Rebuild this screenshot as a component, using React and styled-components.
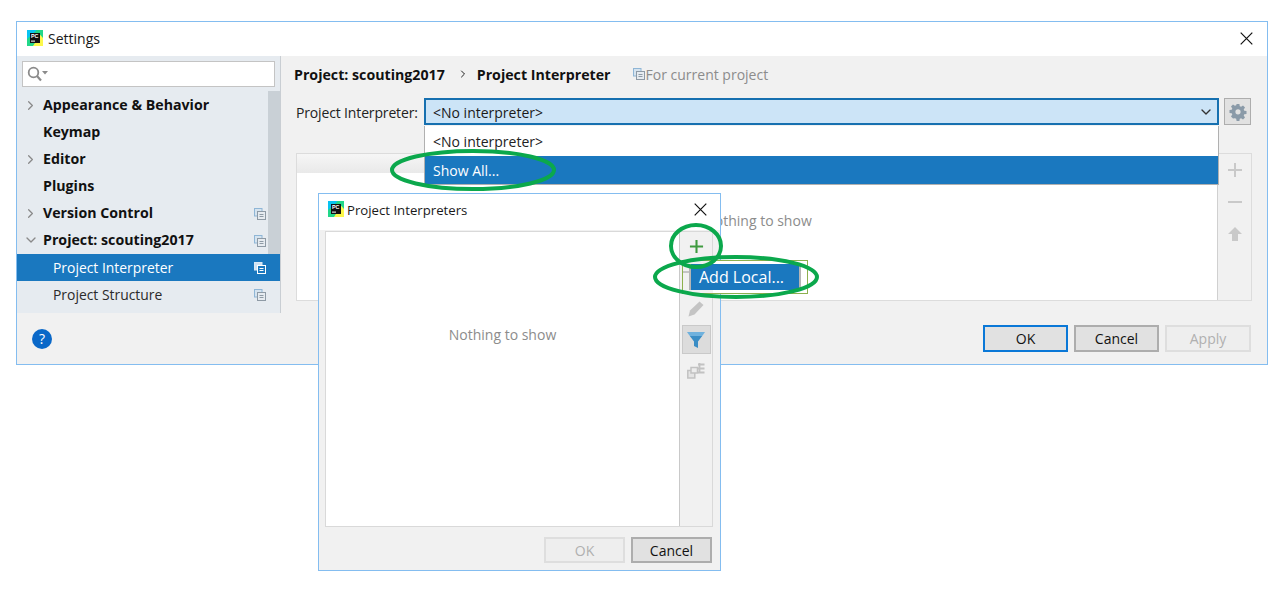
import React from "react";
import styled, { createGlobalStyle } from "styled-components";
import { ChevronRight, ChevronDown } from "lucide-react";

const GlobalStyle = createGlobalStyle`
  html, body { margin: 0; padding: 0; background: #fff; }
  body { font-family: "Open Sans", "Noto Sans", sans-serif; font-size: 14px; color: #1a1a1a; }
`;

const navItems = [
  { label: "Appearance & Behavior", arrow: "right" },
  { label: "Keymap" },
  { label: "Editor", arrow: "right" },
  { label: "Plugins" },
  { label: "Version Control", arrow: "right", copy: true },
  { label: "Project: scouting2017", arrow: "down", copy: true },
  { label: "Project Interpreter", child: true, selected: true, copy: true },
  { label: "Project Structure", child: true, copy: true },
];

const PcLogo = ({ size = 16 }) => (
  <svg width={size} height={size} viewBox="0 0 16 16">
    <rect width="16" height="16" fill="#21d789" />
    <path d="M0 0H10L0 9Z" fill="#07c3f2" />
    <path d="M16 0V16H6Z" fill="#fcf84a" />
    <path d="M9 0H16V8Z" fill="#21d789" />
    <rect x="3" y="3" width="10" height="10" fill="#111" />
    <text x="4" y="8.4" fontSize="5.4" fontWeight="700" fill="#fff" fontFamily="Liberation Sans, sans-serif">PC</text>
    <rect x="4" y="10.6" width="4" height="1" fill="#fff" />
  </svg>
);

const CloseIcon = () => (
  <svg width="13" height="13" viewBox="0 0 13 13">
    <path d="M.7.7 12.3 12.3M12.3.7.7 12.3" stroke="#111" strokeWidth="1.2" fill="none" />
  </svg>
);

const CopyIcon = ({ light }) => (
  <svg width="12" height="12" viewBox="0 0 12 12" fill="none">
    <rect x=".5" y=".5" width="7.5" height="7.5" fill={light ? "#cfe2f2" : "#d5e3ef"} stroke={light ? "#dbe9f5" : "#8fb6d6"} />
    <rect x="3.5" y="3.5" width="8" height="8" fill={light ? "#1a78bf" : "#e6ebf0"} stroke={light ? "#fff" : "#8e9aa5"} />
    <path d="M5.5 6.5h4M5.5 8.5h4" stroke={light ? "#fff" : "#8e9aa5"} />
  </svg>
);

const SearchIcon = () => (
  <svg width="22" height="16" viewBox="0 0 22 16" fill="none">
    <circle cx="6.5" cy="6.5" r="4.8" stroke="#8b8b8b" strokeWidth="1.8" />
    <path d="M10 10l4 4.5" stroke="#8b8b8b" strokeWidth="2.2" />
    <path d="M15 5h6l-3 3.4z" fill="#8b8b8b" />
  </svg>
);

const GearIcon = () => (
  <svg width="18" height="18" viewBox="0 0 18 18">
    <path
      fill="#8a9aa8"
      fillRule="evenodd"
      d="M7.6 1h2.8l.4 2.2 1.3.6 1.9-1.3 2 2-1.3 1.9.6 1.3 2.2.4v2.8l-2.2.4-.6 1.3 1.3 1.9-2 2-1.9-1.3-1.3.6-.4 2.2H7.6l-.4-2.2-1.3-.6L4 15.5l-2-2 1.3-1.9-.6-1.3L.5 9.9V7.1l2.2-.4.6-1.3L2 3.5l2-2 1.9 1.3 1.3-.6zM9 6.2a2.6 2.6 0 1 0 0 5.2 2.6 2.6 0 0 0 0-5.2z"
    />
  </svg>
);

const PlusIcon = ({ color, size = 16, weight = 2 }) => (
  <svg width={size} height={size} viewBox="0 0 16 16">
    <path d="M8 1v14M1 8h14" stroke={color} strokeWidth={weight} />
  </svg>
);

const MinusIcon = () => (
  <svg width="16" height="16" viewBox="0 0 16 16">
    <path d="M1 8h14" stroke="#c9c9c9" strokeWidth="2" />
  </svg>
);

const UpIcon = () => (
  <svg width="16" height="16" viewBox="0 0 16 16">
    <path d="M8 1l7 7h-4v7H5V8H1z" fill="#c9c9c9" />
  </svg>
);

const PencilIcon = () => (
  <svg width="16" height="16" viewBox="0 0 16 16">
    <path d="M.5 15.500l1.500-6L11.500.5 15.500 4l-9 9.500z" fill="#c4c4c4" />
  </svg>
);

const FilterIcon = () => (
  <svg width="18" height="16" viewBox="0 0 18 16">
    <path d="M0 0h18l-2.800 4H2.800z" fill="#6fb1dd" />
    <path d="M2.800 4h12.400L11 9.500V16L7 14V9.500z" fill="#3a8dc5" />
  </svg>
);

const TreeIcon = () => (
  <svg width="18" height="16" viewBox="0 0 18 16" fill="none" stroke="#c2c2c2" strokeWidth="1.500">
    <rect x=".8" y="7.500" width="7" height="7.500" fill="#e4e4e4" />
    <rect x="4" y="4.500" width="6.500" height="5.500" fill="#ececec" />
    <path d="M11 1.500h6.500M11 5.500h6.500M11 9.500h6.500M12.500 0v10" strokeWidth="1.800" />
  </svg>
);

export default function App() {
  return (
    <Page>
      <GlobalStyle />
      <SettingsWindow>
        <TitleBar>
          <TitleLeft>
            <PcLogo />
            <span>Settings</span>
          </TitleLeft>
          <CloseIcon />
        </TitleBar>
        <Main>
          <Sidebar>
            <SearchBox>
              <SearchIcon />
            </SearchBox>
            <NavList>
              {navItems.map(item => (
                <NavRow key={item.label} $selected={item.selected} $child={item.child}>
                  {!item.child && (
                    <ArrowSlot>
                      {item.arrow === "right" && <ChevronRight size={15} strokeWidth={2} color="#8a8a8a" />}
                      {item.arrow === "down" && <ChevronDown size={16} strokeWidth={2} color="#8a8a8a" />}
                    </ArrowSlot>
                  )}
                  <NavLabel $bold={!item.child}>{item.label}</NavLabel>
                  {item.copy && (
                    <CopySlot>
                      <CopyIcon light={item.selected} />
                    </CopySlot>
                  )}
                </NavRow>
              ))}
            </NavList>
            <ScrollThumb />
          </Sidebar>
          <Content>
            <Breadcrumb>
              <strong>Project: scouting2017</strong>
              <CrumbSeparator>
                <ChevronRight size={12} strokeWidth={2} color="#222" />
              </CrumbSeparator>
              <strong>Project Interpreter</strong>
              <ForProject>
                <CopyIcon />
                For current project
              </ForProject>
            </Breadcrumb>
            <InterpreterRow>
              <label>Project Interpreter:</label>
              <Combo>
                <span>&lt;No interpreter&gt;</span>
                <ChevronDown size={16} strokeWidth={2} color="#333" />
              </Combo>
              <GearButton>
                <GearIcon />
              </GearButton>
            </InterpreterRow>
            <TablePanel>
              <TableMain>
                <TableHead />
                <EmptyText>Nothing to show</EmptyText>
              </TableMain>
              <SideTools>
                <PlusIcon color="#c9c9c9" />
                <MinusIcon />
                <UpIcon />
              </SideTools>
            </TablePanel>
          </Content>
        </Main>
        <Footer>
          <HelpButton>?</HelpButton>
          <ButtonRow>
            <DialogButton $width={85} $primary>OK</DialogButton>
            <DialogButton $width={85}>Cancel</DialogButton>
            <DialogButton $width={86} disabled>Apply</DialogButton>
          </ButtonRow>
        </Footer>
      </SettingsWindow>

      <DropdownList>
        <DropItem>&lt;No interpreter&gt;</DropItem>
        <DropItem $active>Show All...</DropItem>
      </DropdownList>

      <InterpretersDialog>
        <DialogTitle>
          <TitleLeft>
            <PcLogo />
            <span>Project Interpreters</span>
          </TitleLeft>
          <CloseIcon />
        </DialogTitle>
        <DialogBody>
          <ListArea>
            <ListBox>Nothing to show</ListBox>
            <ListTools>
              <ToolSlot>
                <PlusIcon color="#3f9b3f" size={15} weight={2.2} />
              </ToolSlot>
              <ToolSlot />
              <ToolSlot>
                <PencilIcon />
              </ToolSlot>
              <ToolSlot $active>
                <FilterIcon />
              </ToolSlot>
              <ToolSlot>
                <TreeIcon />
              </ToolSlot>
            </ListTools>
          </ListArea>
          <DialogActions>
            <DialogButton $width={81} $short disabled>OK</DialogButton>
            <DialogButton $width={81} $short>Cancel</DialogButton>
          </DialogActions>
        </DialogBody>
      </InterpretersDialog>

      <PopupFrame>
        <MinusPeek />
        <AddLocal>Add Local...</AddLocal>
      </PopupFrame>

      <Annotations viewBox="0 0 1281 593">
        <ellipse cx="473" cy="170" rx="81" ry="19" />
        <ellipse cx="696" cy="246" rx="25" ry="21" />
        <ellipse cx="736" cy="277" rx="81" ry="20" />
      </Annotations>
    </Page>
  );
}

const Page = styled.div`
  position: relative;
  width: 1281px;
  height: 593px;
  padding: 21px 0 0 16px;
  box-sizing: border-box;
  overflow: hidden;
`;

const SettingsWindow = styled.div`
  width: 1252px;
  height: 344px;
  box-sizing: border-box;
  border: 1px solid #84bdf0;
  background: #f1f1f1;
  display: flex;
  flex-direction: column;
`;

const TitleBar = styled.div`
  height: 34px;
  flex: none;
  box-sizing: border-box;
  background: #fff;
  display: flex;
  align-items: center;
  justify-content: space-between;
  padding: 0 14px 2px 10px;
  span { font-size: 14px; }
`;

const TitleLeft = styled.div`
  display: flex;
  align-items: center;
  gap: 5px;
`;

const Main = styled.div`
  flex: none;
  height: 257px;
  display: flex;
`;

const Sidebar = styled.div`
  position: relative;
  width: 263px;
  flex: none;
  background: #e6ebf0;
  border-right: 1px solid #c9ced3;
`;

const SearchBox = styled.div`
  height: 26px;
  margin: 5px 5px 0 5px;
  box-sizing: border-box;
  background: #fff;
  border: 1px solid #c4c4c4;
  display: flex;
  align-items: center;
  padding-left: 4px;
`;

const NavList = styled.div`
  padding-top: 5px;
`;

const NavRow = styled.div`
  height: 27px;
  display: flex;
  align-items: center;
  background: ${p => (p.$selected ? "#1a78bf" : "transparent")};
  color: ${p => (p.$selected ? "#fff" : p.$child ? "#2a2a2a" : "#111")};
  padding-left: ${p => (p.$child ? "36px" : "6px")};
`;

const ArrowSlot = styled.div`
  width: 20px;
  flex: none;
  display: flex;
  align-items: center;
  margin-top: -1px;
`;

const NavLabel = styled.span`
  font-size: ${p => (p.$bold ? "14.2px" : "13.9px")};
  font-weight: ${p => (p.$bold ? 700 : 400)};
  margin-top: ${p => (p.$bold ? "-2px" : "0")};
`;

const CopySlot = styled.div`
  margin-left: auto;
  margin-right: 14px;
  display: flex;
`;

const ScrollThumb = styled.div`
  position: absolute;
  right: 0;
  top: 35px;
  width: 12px;
  height: 163px;
  background: #c9d0d6;
`;

const Content = styled.div`
  flex: 1;
  min-width: 0;
  padding: 8px 16px 0 13px;
`;

const Breadcrumb = styled.div`
  height: 20px;
  display: flex;
  align-items: center;
  gap: 8px;
  strong { font-size: 14.2px; font-weight: 700; color: #111; }
`;

const CrumbSeparator = styled.span`
  display: flex;
  margin-left: 4px;
`;

const ForProject = styled.span`
  display: flex;
  align-items: center;
  gap: 1px;
  margin-left: 14px;
  color: #8c8c8c;
  font-size: 14px;
`;

const InterpreterRow = styled.div`
  margin: 14px 0 0 2px;
  height: 27px;
  display: flex;
  align-items: center;
  label { width: 128px; flex: none; color: #222; font-size: 14px; letter-spacing: -0.15px; padding-top: 2px; }
`;

const Combo = styled.div`
  flex: 1;
  height: 27px;
  box-sizing: border-box;
  background: #cce4f7;
  border: 2px solid #1670b0;
  display: flex;
  align-items: center;
  justify-content: space-between;
  padding: 0 3px 0 7px;
  span { padding-top: 2px; }
`;

const GearButton = styled.div`
  width: 27px;
  height: 27px;
  margin-left: 5px;
  box-sizing: border-box;
  background: #e1e1e1;
  border: 1px solid #adadad;
  display: flex;
  align-items: center;
  justify-content: center;
`;

const TablePanel = styled.div`
  margin: 28px 0 0 2px;
  width: 956px;
  height: 148px;
  box-sizing: border-box;
  border: 1px solid #dcdcdc;
  display: flex;
`;

const TableMain = styled.div`
  flex: 1;
  background: #fff;
  display: flex;
  flex-direction: column;
  border-right: 1px solid #d0d0d0;
`;

const TableHead = styled.div`
  height: 19px;
  background: linear-gradient(#f6f6f6, #e9e9e9);
`;

const EmptyText = styled.div`
  flex: 1;
  display: flex;
  align-items: center;
  justify-content: center;
  padding: 0 0 32px 2px;
  color: #8c8c8c;
  font-size: 14px;
`;

const SideTools = styled.div`
  width: 33px;
  flex: none;
  display: flex;
  flex-direction: column;
  align-items: center;
  gap: 16px;
  padding-top: 8px;
`;

const Footer = styled.div`
  flex: 1;
  display: flex;
  align-items: center;
  justify-content: space-between;
  padding: 0 16px 0 15px;
`;

const HelpButton = styled.div`
  width: 20px;
  height: 20px;
  border-radius: 50%;
  background: #0a68c8;
  color: #fff;
  font-size: 14px;
  display: flex;
  align-items: center;
  justify-content: center;
`;

const ButtonRow = styled.div`
  display: flex;
  gap: 6px;
`;

const DialogButton = styled.button`
  width: ${p => p.$width}px;
  height: ${p => (p.$short ? "26px" : "27px")};
  padding: 0;
  box-sizing: border-box;
  font-family: inherit;
  font-size: 14px;
  background: ${p => (p.disabled ? "#eeeeee" : "#e1e1e1")};
  color: ${p => (p.disabled ? "#b0b0b0" : "#111")};
  border: ${p =>
    p.$primary ? "2px solid #0a78d7" : p.disabled ? "2px solid #dedede" : "2px solid #adadad"};
`;

const DropdownList = styled.div`
  position: absolute;
  left: 424px;
  top: 126px;
  width: 795px;
  box-sizing: border-box;
  background: #fff;
  border: solid #b0b0b0;
  border-width: 0 1px 1px 1px;
`;

const DropItem = styled.div`
  height: ${p => (p.$active ? "28px" : "30px")};
  padding-left: 8px;
  display: flex;
  align-items: center;
  font-size: 14px;
  background: ${p => (p.$active ? "#1a78bf" : "#fff")};
  color: ${p => (p.$active ? "#fff" : "#222")};
`;

const InterpretersDialog = styled.div`
  position: absolute;
  left: 318px;
  top: 193px;
  width: 403px;
  height: 378px;
  box-sizing: border-box;
  border: 1px solid #84bdf0;
  background: #f1f1f1;
  display: flex;
  flex-direction: column;
`;

const DialogTitle = styled(TitleBar)`
  height: 36px;
  padding: 0 13px 6px 9px;
  span { font-size: 13.2px; padding-top: 2px; }
  ${TitleLeft} { gap: 3px; }
`;

const DialogBody = styled.div`
  flex: 1;
  display: flex;
  flex-direction: column;
  padding: 1px 7px 6px 6px;
`;

const ListArea = styled.div`
  height: 296px;
  display: flex;
  border: 1px solid #d9d9d9;
  box-sizing: border-box;
`;

const ListBox = styled.div`
  flex: 1;
  background: #fff;
  border-right: 1px solid #c9c9c9;
  display: flex;
  align-items: center;
  justify-content: center;
  padding-bottom: 90px;
  color: #8c8c8c;
  font-size: 14px;
`;

const ListTools = styled.div`
  width: 32px;
  flex: none;
  display: flex;
  flex-direction: column;
  align-items: center;
  gap: 2px;
`;

const ToolSlot = styled.div`
  width: 29px;
  height: 29px;
  box-sizing: border-box;
  display: flex;
  align-items: center;
  justify-content: center;
  background: ${p => (p.$active ? "#dcdcdc" : "transparent")};
  border: 1px solid ${p => (p.$active ? "#c9c9c9" : "transparent")};
`;

const DialogActions = styled.div`
  margin-top: 10px;
  padding-right: 1px;
  display: flex;
  justify-content: flex-end;
  gap: 6px;
`;

const PopupFrame = styled.div`
  position: absolute;
  left: 682px;
  top: 260px;
  width: 126px;
  height: 34px;
  box-sizing: border-box;
  border: 1px solid #8db04e;
  background: linear-gradient(90deg, #f1f1f1 30px, #fff 30px);
  padding: 3px 6px 3px 6px;
`;

const MinusPeek = styled.div`
  position: absolute;
  left: 0;
  top: 10px;
  width: 6px;
  height: 2px;
  background: #c4c4c4;
`;

const AddLocal = styled.div`
  height: 26px;
  box-sizing: border-box;
  background: #1a78bf;
  color: #fff;
  font-size: 16px;
  border: solid #b5b5b5;
  border-width: 0 2px;
  padding-left: 8px;
  display: flex;
  align-items: center;
`;

const Annotations = styled.svg`
  position: absolute;
  left: 0;
  top: 0;
  width: 1281px;
  height: 593px;
  pointer-events: none;
  ellipse {
    fill: none;
    stroke: #0ba84c;
    stroke-width: 4;
  }
`;
